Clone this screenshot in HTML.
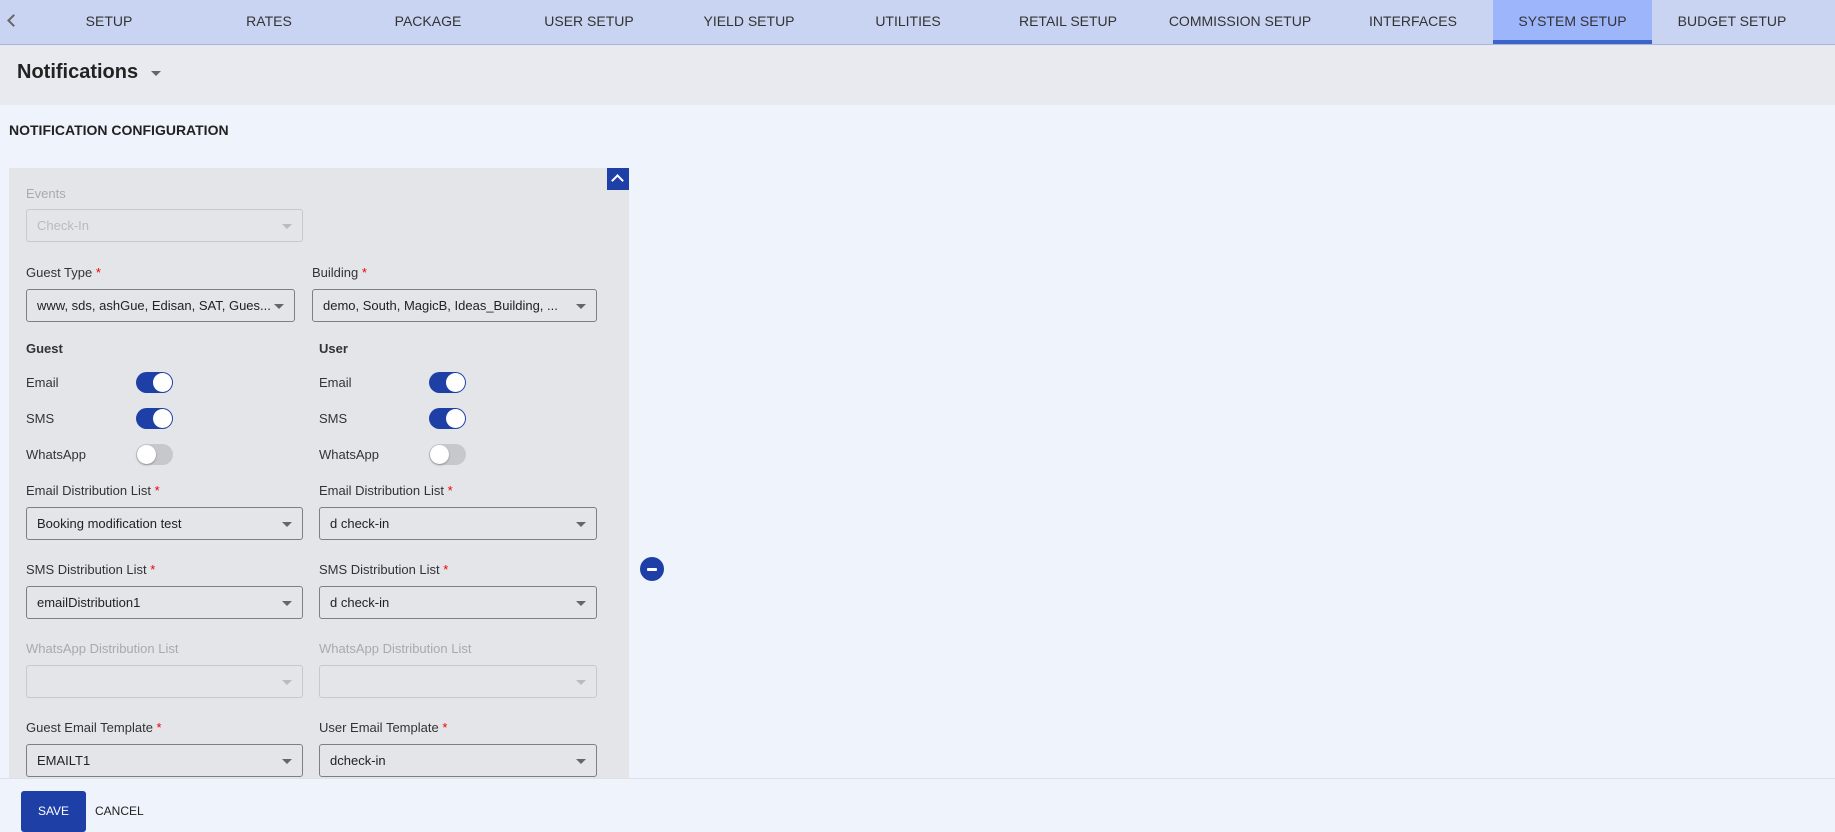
<!DOCTYPE html>
<html><head><meta charset="utf-8"><style>
*{box-sizing:border-box;margin:0;padding:0}
body{width:1835px;height:831px;overflow:hidden;background:#eff3fb;font-family:"Liberation Sans",sans-serif;color:#222;position:relative}
.nav{position:absolute;left:0;top:0;width:1835px;height:45px;background:#c9d4f2;border-bottom:1px solid #aab6d8}
.nav .tab{position:absolute;top:0;height:44px;width:160px;text-align:center;line-height:42px;font-size:14px;color:#333}
.nav .act{background:#9db5fb;border-bottom:4px solid #3a64c8}
.hdr{position:absolute;left:0;top:45px;width:1835px;height:60px;background:#e9eaef}
.hdr .t{position:absolute;left:17px;top:16px;font-size:20px;font-weight:bold;color:#222}
.tri{position:absolute;width:0;height:0;border-left:5px solid transparent;border-right:5px solid transparent;border-top:5px solid #666}
.sec{position:absolute;left:9px;top:122px;font-size:14px;font-weight:bold;color:#222}
.panel{position:absolute;left:9px;top:168px;width:620px;height:610px;background:#e4e5e9}
.lbl{position:absolute;font-size:13px;color:#333}
.lbl b{color:#e00;font-weight:normal}
.dis{color:#aaa}
.sel{position:absolute;height:33px;border:1px solid #7d7f87;border-radius:3px;font-size:13px;color:#222;padding:0 10px;line-height:31px;white-space:nowrap;overflow:hidden}
.sel.d{border-color:#c8c9cf;color:#bbb}
.sel .tri{right:10px;top:14px}
.sel.d .tri{border-top-color:#bbb}
.tg{position:absolute;width:37px;height:21px;border-radius:11px;background:#1e3fa6}
.tg:after{content:"";position:absolute;right:1px;top:1px;width:19px;height:19px;border-radius:50%;background:#fff}
.tg.off{background:#c7c8cc}
.tg.off:after{left:1px;right:auto;box-shadow:0 1px 2px rgba(0,0,0,.3)}
.h{position:absolute;font-size:13px;font-weight:bold;color:#333}
.foot{position:absolute;left:0;top:778px;width:1835px;height:53px;background:#eff3fb;border-top:1px solid #dde1ea}
</style></head><body>
<div class="nav">
<div style="position:absolute;left:6px;top:13px;width:9px;height:9px;border-left:2px solid #666;border-bottom:2px solid #666;transform:translateX(3px) translateY(3px) rotate(45deg)"></div>
<div class="tab" style="left:29px">SETUP</div>
<div class="tab" style="left:189px">RATES</div>
<div class="tab" style="left:348px">PACKAGE</div>
<div class="tab" style="left:509px">USER SETUP</div>
<div class="tab" style="left:669px">YIELD SETUP</div>
<div class="tab" style="left:828px">UTILITIES</div>
<div class="tab" style="left:988px">RETAIL SETUP</div>
<div class="tab" style="left:1160px;width:160px">COMMISSION SETUP</div>
<div class="tab" style="left:1333px">INTERFACES</div>
<div class="tab act" style="left:1493px;width:159px">SYSTEM SETUP</div>
<div class="tab" style="left:1652px">BUDGET SETUP</div>
</div>
<div class="hdr"><div class="t">Notifications</div><div class="tri" style="left:151px;top:26px"></div></div>
<div class="sec">NOTIFICATION CONFIGURATION</div>
<div class="panel">
<div style="position:absolute;left:598px;top:0;width:22px;height:22px;background:#1e3fa6"><div style="position:absolute;left:6px;top:8px;width:9px;height:9px;border-left:2px solid #fff;border-top:2px solid #fff;transform:rotate(45deg)"></div></div>
<div class="lbl dis" style="left:17px;top:18px">Events</div>
<div class="sel d" style="left:17px;top:41px;width:277px">Check-In<div class="tri"></div></div>
<div class="lbl" style="left:17px;top:97px">Guest Type <b>*</b></div>
<div class="lbl" style="left:303px;top:97px">Building <b>*</b></div>
<div class="sel" style="left:17px;top:121px;width:269px">www, sds, ashGue, Edisan, SAT, Gues...<div class="tri"></div></div>
<div class="sel" style="left:303px;top:121px;width:285px">demo, South, MagicB, Ideas_Building, ...<div class="tri"></div></div>
<div class="h" style="left:17px;top:173px">Guest</div>
<div class="h" style="left:310px;top:173px">User</div>
<div class="lbl" style="left:17px;top:207px">Email</div><div class="tg" style="left:127px;top:204px"></div>
<div class="lbl" style="left:310px;top:207px">Email</div><div class="tg" style="left:420px;top:204px"></div>
<div class="lbl" style="left:17px;top:243px">SMS</div><div class="tg" style="left:127px;top:240px"></div>
<div class="lbl" style="left:310px;top:243px">SMS</div><div class="tg" style="left:420px;top:240px"></div>
<div class="lbl" style="left:17px;top:279px">WhatsApp</div><div class="tg off" style="left:127px;top:276px"></div>
<div class="lbl" style="left:310px;top:279px">WhatsApp</div><div class="tg off" style="left:420px;top:276px"></div>
<div class="lbl" style="left:17px;top:315px">Email Distribution List <b>*</b></div>
<div class="lbl" style="left:310px;top:315px">Email Distribution List <b>*</b></div>
<div class="sel" style="left:17px;top:339px;width:277px">Booking modification test<div class="tri"></div></div>
<div class="sel" style="left:310px;top:339px;width:278px">d check-in<div class="tri"></div></div>
<div class="lbl" style="left:17px;top:394px">SMS Distribution List <b>*</b></div>
<div class="lbl" style="left:310px;top:394px">SMS Distribution List <b>*</b></div>
<div class="sel" style="left:17px;top:418px;width:277px">emailDistribution1<div class="tri"></div></div>
<div class="sel" style="left:310px;top:418px;width:278px">d check-in<div class="tri"></div></div>
<div class="lbl dis" style="left:17px;top:473px">WhatsApp Distribution List</div>
<div class="lbl dis" style="left:310px;top:473px">WhatsApp Distribution List</div>
<div class="sel d" style="left:17px;top:497px;width:277px"><div class="tri"></div></div>
<div class="sel d" style="left:310px;top:497px;width:278px"><div class="tri"></div></div>
<div class="lbl" style="left:17px;top:552px">Guest Email Template <b>*</b></div>
<div class="lbl" style="left:310px;top:552px">User Email Template <b>*</b></div>
<div class="sel" style="left:17px;top:576px;width:277px">EMAILT1<div class="tri"></div></div>
<div class="sel" style="left:310px;top:576px;width:278px">dcheck-in<div class="tri"></div></div>
</div>
<div style="position:absolute;left:640px;top:557px;width:24px;height:24px;border-radius:50%;background:#1e3fa6"><div style="position:absolute;left:7px;top:11px;width:10px;height:3px;background:#fff;border-radius:1px"></div></div>
<div class="foot">
<div style="position:absolute;left:21px;top:12px;width:65px;height:41px;background:#1e3fa6;border-radius:3px;color:#fff;font-size:12px;text-align:center;line-height:40px">SAVE</div>
<div style="position:absolute;left:95px;top:12px;font-size:12px;line-height:40px;color:#222">CANCEL</div>
</div>
</body></html>
